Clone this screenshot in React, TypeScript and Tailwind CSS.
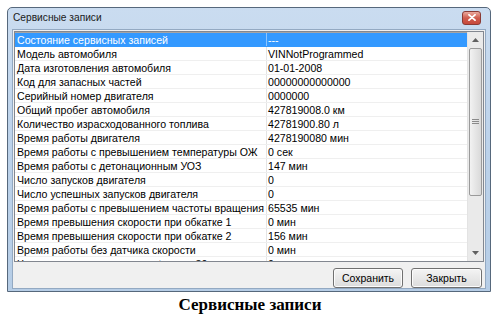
import React from 'react';

const rows: [string, string][] = [
  ['Состояние сервисных записей', '---'],
  ['Модель автомобиля', 'VINNotProgrammed'],
  ['Дата изготовления автомобиля', '01-01-2008'],
  ['Код для запасных частей', '00000000000000'],
  ['Серийный номер двигателя', '0000000'],
  ['Общий пробег автомобиля', '427819008.0 км'],
  ['Количество израсходованного топлива', '42781900.80 л'],
  ['Время работы двигателя', '4278190080 мин'],
  ['Время работы с превышением температуры ОЖ', '0 сек'],
  ['Время работы с детонационным УОЗ', '147 мин'],
  ['Число запусков двигателя', '0'],
  ['Число успешных запусков двигателя', '0'],
  ['Время работы с превышением частоты вращения', '65535 мин'],
  ['Время превышения скорости при обкатке 1', '0 мин'],
  ['Время превышения скорости при обкатке 2', '156 мин'],
  ['Время работы без датчика скорости', '0 мин'],
  ['Число пусков двигателя при t ниже -30', '0'],
];

const ScrollBar: React.FC = () => (
  <div className="w-[16px] flex flex-col bg-[#eaeaea] border-l border-[#e3e3e3]">
    <div className="h-[16px] flex items-center justify-center">
      <svg width="7" height="4" viewBox="0 0 7 4">
        <path d="M0 4 L3.5 0 L7 4 Z" fill="#606060" />
      </svg>
    </div>
    <div className="h-[148px] mx-[1px] rounded-[2px] border border-[#9a9a9a] bg-gradient-to-r from-[#f2f2f2] to-[#d9d9d9] flex items-center justify-center">
      <svg width="7" height="6" viewBox="0 0 7 6">
        <path d="M0 0.5 H7 M0 2.5 H7 M0 4.5 H7" stroke="#8a8a8a" strokeWidth="1" />
      </svg>
    </div>
    <div className="flex-1" />
    <div className="h-[16px] flex items-center justify-center">
      <svg width="7" height="4" viewBox="0 0 7 4">
        <path d="M0 0 L7 0 L3.5 4 Z" fill="#606060" />
      </svg>
    </div>
  </div>
);

const Button: React.FC<{ label: string; w: string }> = ({ label, w }) => (
  <button
    className={`${w} h-[20px] rounded-[3px] border border-[#707070] bg-gradient-to-b from-[#f4f4f4] to-[#dcdcdc] text-[10.5px] text-black leading-none shadow-[inset_0_0_0_1px_#fcfcfc]`}
  >
    {label}
  </button>
);

const App: React.FC = () => {
  return (
    <div className="w-[500px] h-[322px] bg-white pt-[7px] pl-[7px] font-['Liberation_Sans',Arial,sans-serif] overflow-hidden">
      <div className="w-[484px] h-[285px] border border-[#56687c] rounded-t-[5px] bg-gradient-to-b from-[#cadcf0] via-[#bcd2ea] to-[#b6cde6] flex flex-col">
        <div className="h-[22px] flex items-center justify-between pl-[5px] pr-[9px] pb-[2px]">
          <span className="text-[10.2px] text-[#1a1a1a]">Сервисные записи</span>
          <div className="w-[19px] h-[14px] rounded-[3px] border border-[#8a3a34] bg-gradient-to-b from-[#e9a99e] via-[#cf5c4e] to-[#c7483b] flex items-center justify-center">
            <svg width="8" height="7" viewBox="0 0 8 7">
              <path d="M1 0.8 L7 6.2 M7 0.8 L1 6.2" stroke="#ffffff" strokeWidth="1.8" strokeLinecap="round" />
            </svg>
          </div>
        </div>
        <div className="flex-1 mx-[4px] mb-[2px] border border-[#93a9c2] bg-[#f0f0f0] flex flex-col">
          <div className="mt-[1px] ml-[1px] w-[470px] h-[231px] border border-[#828790] bg-white flex overflow-hidden">
            <div className="flex-1 flex flex-col overflow-hidden">
              <div className="h-[1px] bg-[#a5a5a5] shrink-0" />
              {rows.map(([k, v], i) => (
                <div
                  key={i}
                  className={`h-[14px] shrink-0 flex text-[10.6px] leading-[14px] border-b ${
                    i === 0 ? 'bg-[#3399ff] text-white border-[#3399ff]' : 'text-black border-[#efefef]'
                  }`}
                >
                  <div
                    className={`w-[252px] pl-[2px] whitespace-nowrap overflow-hidden border-r ${
                      i === 0 ? 'border-[#8cc4ff]' : 'border-[#e4e4e4]'
                    }`}
                  >
                    {k}
                  </div>
                  <div className="flex-1 pl-[1px] whitespace-nowrap overflow-hidden">{v}</div>
                </div>
              ))}
            </div>
            <ScrollBar />
          </div>
          <div className="mt-[6px] flex justify-end gap-[8px] pr-[3px]">
            <Button label="Сохранить" w="w-[70px]" />
            <Button label="Закрыть" w="w-[71px]" />
          </div>
        </div>
      </div>
      <div className="w-[486px] text-center font-['Liberation_Serif','Times_New_Roman',serif] font-bold text-[17px] leading-[20px] text-black mt-[3px]">
        Сервисные записи
      </div>
    </div>
  );
};

export default App;
